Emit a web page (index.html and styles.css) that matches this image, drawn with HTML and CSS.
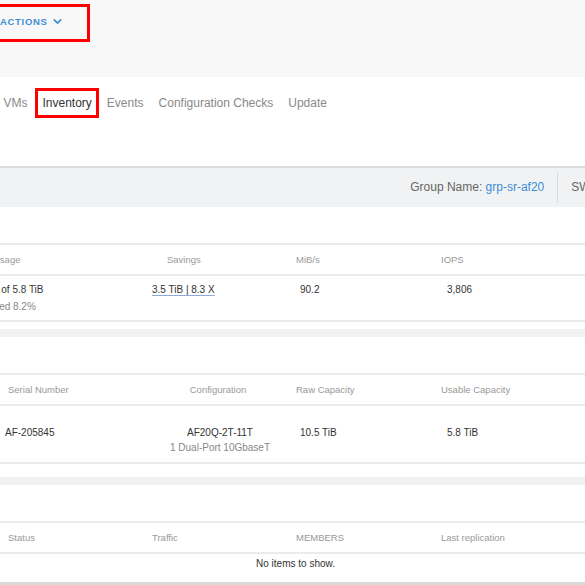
FILE: index.html
```html
<!DOCTYPE html>
<html lang="en">
<head>
    <meta charset="UTF-8">
    <meta name="viewport" content="width=device-width, initial-scale=1.0">
    <title>Group Inventory</title>
    <link rel="stylesheet" href="styles.css">
</head>
<body>
    <header class="topbar">
        <button class="actions">
            ACTIONS
            <svg width="9" height="7" viewBox="0 0 9 7"><path d="M0.8 1.4 L4.5 5 L8.2 1.4" fill="none" stroke="#3d8ed6" stroke-width="1.7"/></svg>
        </button>
    </header>

    <nav class="tabs">
        <a class="tab">VMs</a>
        <a class="tab active">Inventory</a>
        <a class="tab">Events</a>
        <a class="tab">Configuration Checks</a>
        <a class="tab">Update</a>
    </nav>

    <div class="infobar">
        <div class="info">Group Name: <a class="link">grp-sr-af20</a></div>
        <div class="info">SW Version: 3.8.1.12</div>
    </div>

    <section class="panel">
        <div class="grid head">
            <div class="cell first"><span class="clip">Usage</span></div>
            <div class="cell savings-head">Savings</div>
            <div class="cell">MiB/s</div>
            <div class="cell">IOPS</div>
        </div>
        <div class="grid row tall">
            <div class="cell first">
                <div class="clip-data used"><span class="under">478.7 GiB</span> of 5.8 TiB</div>
                <div class="sub clip-data">Provisioned 8.2%</div>
            </div>
            <div class="cell savings"><span class="under">3.5 TiB | 8.3 X</span></div>
            <div class="cell c3">90.2</div>
            <div class="cell c4">3,806</div>
        </div>
        <div class="foot small"></div>
    </section>

    <section class="panel">
        <div class="grid head">
            <div class="cell first">Serial Number</div>
            <div class="cell center">Configuration</div>
            <div class="cell">Raw Capacity</div>
            <div class="cell">Usable Capacity</div>
        </div>
        <div class="grid row hw">
            <div class="cell serial">AF-205845</div>
            <div class="cell center config">
                AF20Q-2T-11T
                <div class="sub">1 Dual-Port 10GbaseT</div>
            </div>
            <div class="cell c3">10.5 TiB</div>
            <div class="cell c4">5.8 TiB</div>
        </div>
        <div class="foot"></div>
    </section>

    <section class="panel last">
        <div class="grid head">
            <div class="cell first">Status</div>
            <div class="cell">Traffic</div>
            <div class="cell">MEMBERS</div>
            <div class="cell">Last replication</div>
        </div>
        <div class="empty">No items to show.</div>
    </section>
</body>
</html>
```

FILE: styles.css
```css
body {
    font-family: 'Liberation Sans', Arial, sans-serif;
    background-color: #f2f2f3;
    margin: 0;
    padding: 0;
    overflow: hidden;
}

.topbar {
    background-color: #f8f8f8;
    height: 77px;
    padding-top: 4px;
    box-sizing: border-box;
}

.actions {
    display: inline-flex;
    align-items: center;
    gap: 5px;
    height: 38px;
    margin-left: -29px;
    padding: 0 25px 4px 26px;
    border: 3px solid #f00;
    background: none;
    color: #3d8ed6;
    font-family: 'Liberation Sans', Arial, sans-serif;
    font-size: 9.5px;
    font-weight: bold;
    letter-spacing: 0.7px;
}

.tabs {
    display: flex;
    background-color: #fff;
    height: 91px;
    padding-top: 11px;
    margin-left: -4px;
    box-sizing: border-box;
    border-bottom: 2px solid #dcdcdc;
}

.tab {
    height: 30px;
    padding: 0 7.5px;
    line-height: 30px;
    font-size: 12px;
    color: #8a8a8a;
    box-sizing: border-box;
}

.tab.active {
    color: #333;
    outline: 3px solid #f00;
    outline-offset: -3px;
}

.infobar {
    display: flex;
    justify-content: flex-end;
    align-items: center;
    height: 39px;
    margin-right: -112px;
    background-color: #f1f2f4;
    font-size: 12px;
    color: #666;
}

.info {
    padding: 0 13px;
    line-height: 31px;
    white-space: nowrap;
}

.info:first-child {
    border-right: 1px solid #dcdcdc;
}

.link {
    color: #3d8ed6;
}

.panel {
    background-color: #fff;
    padding-top: 36px;
    margin-bottom: 8px;
}

.panel.last {
    margin-bottom: 0;
    border-bottom: 4px solid #d9d9d9;
}

.grid {
    display: grid;
    grid-template-columns: 146px 144px 145px 1fr;
}

.head {
    border-top: 2px solid #ebebeb;
    border-bottom: 2px solid #ebebeb;
    height: 33px;
    box-sizing: border-box;
    align-items: center;
    font-size: 9.5px;
    color: #999;
}

.head .cell {
    padding-left: 6px;
}

.head .cell.first {
    padding-left: 8px;
}

.head .cell.center {
    padding-left: 0;
    text-align: center;
}

.head .savings-head {
    padding-left: 21px;
}

.clip {
    margin-left: -15px;
}

.clip-data {
    margin-left: -42px;
    white-space: nowrap;
}

.clip-data.used {
    margin-left: -46px;
}

.row {
    border-bottom: 2px solid #ebebeb;
    font-size: 10px;
    color: #333;
    box-sizing: border-box;
}

.row .cell {
    padding-left: 6px;
}

.row.tall {
    height: 46px;
    padding-top: 8px;
}

.row.hw {
    height: 58px;
    padding-top: 21px;
}

.row .cell.first {
    padding-left: 0;
}

.row .cell.serial {
    padding-left: 5px;
}

.row .cell.c3 {
    padding-left: 10px;
}

.row .cell.c4 {
    padding-left: 12px;
}

.row .cell.center {
    padding-left: 4px;
    text-align: center;
}

.sub {
    margin-top: 4px;
    font-size: 10px;
    color: #888;
}

.tall .sub {
    margin-top: 6px;
}

.under {
    text-decoration: underline;
    text-decoration-color: #8fa8dc;
    text-underline-offset: 2px;
}

.foot {
    height: 13px;
}

.foot.small {
    height: 7px;
}

.empty {
    height: 28px;
    padding-left: 6px;
    line-height: 20px;
    text-align: center;
    font-size: 10px;
    color: #333;
}
```
